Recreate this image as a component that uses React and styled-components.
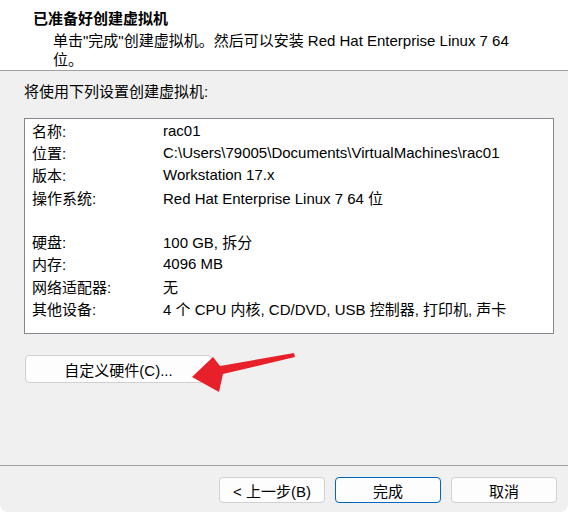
import React from 'react'
import styled, { createGlobalStyle } from 'styled-components'

const GlobalStyle = createGlobalStyle`
html, body {
  margin: 0;
  padding: 0;
  background: #ffffff;
}
body {
  font-family: "Liberation Sans", "Noto Sans CJK SC", sans-serif;
  font-size: 15px;
  color: #000;
}
`

const Window = styled.div`
position: relative;
width: 568px;
height: 512px;
background: #f0f0f0;
border-radius: 0 0 8px 8px;
overflow: hidden;
display: flex;
flex-direction: column;
`

const Header = styled.div`
background: #fff;
height: 71px;
border-bottom: 1px solid #a0a0a0;
box-sizing: border-box;
padding: 9px 0 0 33px;
`

const Title = styled.div`
font-weight: bold;
font-size: 15px;
line-height: 20px;
`

const Subtitle = styled.div`
padding: 2px 0 0 20px;
line-height: 19px;
`

const Body = styled.div`
flex: 1;
padding: 11px 0 0 24px;
display: flex;
flex-direction: column;
align-items: flex-start;
`

const Intro = styled.div`
line-height: 20px;
`

const InfoBox = styled.div`
margin-top: 16px;
width: 530px;
height: 216px;
box-sizing: border-box;
background: #fff;
border: 1px solid #828790;
padding: 0 0 0 7px;
display: grid;
grid-template-columns: 131px 1fr;
grid-auto-rows: 22.3px;
align-content: start;
align-items: center;
`

const Label = styled.div`
white-space: nowrap;
`

const Value = styled.div`
white-space: nowrap;
`

const Gap = styled.div`
grid-column: 1 / 3;
`

const Button = styled.button`
box-sizing: border-box;
width: ${p => p.w || 106}px;
height: ${p => p.h || 26}px;
background: #fdfdfd;
border: 1px solid ${p => p.primary ? '#0067c0' : '#d0d0d0'};
border-radius: 4px;
font-family: inherit;
font-size: 15px;
color: #000;
padding: 0;
`

const CustomButton = styled(Button)`
margin: 21px 0 0 1px;
`

const Footer = styled.div`
border-top: 1px solid #a0a0a0;
height: 47px;
box-sizing: border-box;
display: flex;
justify-content: flex-end;
gap: 10px;
padding: 11px 11px 0 0;
`

const Arrow = styled.svg`
position: absolute;
left: 0;
top: 0;
pointer-events: none;
`

const rows = [
  ['名称:', 'rac01'],
  ['位置:', 'C:\\Users\\79005\\Documents\\VirtualMachines\\rac01'],
  ['版本:', 'Workstation 17.x'],
  ['操作系统:', 'Red Hat Enterprise Linux 7 64 位'],
  null,
  ['硬盘:', '100 GB, 拆分'],
  ['内存:', '4096 MB'],
  ['网络适配器:', '无'],
  ['其他设备:', '4 个 CPU 内核, CD/DVD, USB 控制器, 打印机, 声卡'],
]

const App = () => {
  return (
    <Window>
      <GlobalStyle />
      <Header>
        <Title>已准备好创建虚拟机</Title>
        <Subtitle>
          单击"完成"创建虚拟机。然后可以安装 Red Hat Enterprise Linux 7 64
          <br />
          位。
        </Subtitle>
      </Header>
      <Body>
        <Intro>将使用下列设置创建虚拟机:</Intro>
        <InfoBox>
          {rows.map((r, i) => r ? (
            <React.Fragment key={i}>
              <Label>{r[0]}</Label>
              <Value>{r[1]}</Value>
            </React.Fragment>
          ) : <Gap key={i} />)}
        </InfoBox>
        <CustomButton w={187} h={28}>自定义硬件(C)...</CustomButton>
      </Body>
      <Footer>
        <Button>&lt; 上一步(B)</Button>
        <Button primary>完成</Button>
        <Button>取消</Button>
      </Footer>
      <Arrow width="568" height="512" viewBox="0 0 568 512">
        <polygon
          points="192,377 213,357 220,366 294,353 295,357 223,374 219,392"
          fill="#e8202a"
        />
      </Arrow>
    </Window>
  )
}

export default App
